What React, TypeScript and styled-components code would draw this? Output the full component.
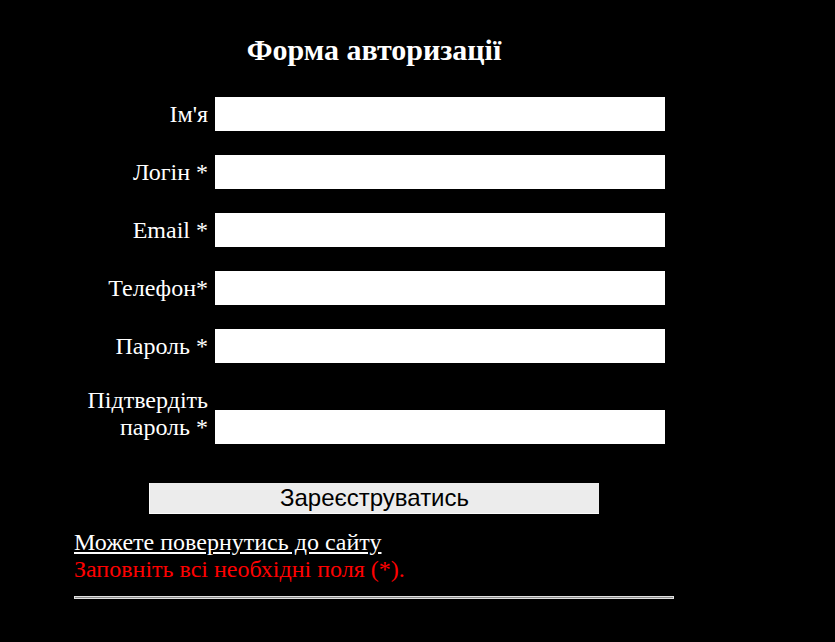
import React from "react";
import styled, { createGlobalStyle } from "styled-components";

const GlobalStyle = createGlobalStyle`
  html, body { margin: 0; padding: 0; background: #000; }
  body { font-family: "Liberation Serif", "Times New Roman", serif; color: #fff; }
`;

const Page = styled.div`
  min-height: 642px;
  background: #000;
  padding: 32px 0 0 74px;
  box-sizing: border-box;
`;

const Form = styled.form`
  width: 600px;
  display: flex;
  flex-direction: column;
`;

const Title = styled.h2`
  margin: 0 0 29px;
  text-align: center;
  font-size: 30px;
  font-weight: bold;
  line-height: 36px;
  color: #fff;
`;

const Fields = styled.div`
  display: grid;
  grid-template-columns: 134px 450px;
  column-gap: 7px;
  row-gap: 24px;
`;

const Label = styled.label<{ $top?: boolean }>`
  font-size: 24px;
  line-height: 27px;
  text-align: right;
  align-self: ${(p) => (p.$top ? "start" : "center")};
  color: #fff;
`;

const Input = styled.input<{ $offset?: number }>`
  width: 450px;
  height: 34px;
  box-sizing: border-box;
  border: none;
  background: #fff;
  margin: ${(p) => (p.$offset ? `${p.$offset}px 0 0` : "0")};
  align-self: ${(p) => (p.$offset ? "start" : "center")};
  outline: none;
`;

const Submit = styled.button`
  width: 450px;
  height: 31px;
  margin: 39px auto 0;
  background: #ececec;
  border: none;
  border-left: 1px solid #fafafa;
  border-bottom: 1px solid #fafafa;
  font-family: "Liberation Sans", Arial, sans-serif;
  font-size: 24px;
  color: #000;
  padding: 0;
  cursor: pointer;
`;

const Footer = styled.div`
  margin-top: 15px;
  display: flex;
  flex-direction: column;
  font-size: 24px;
  line-height: 27px;
`;

const BackLink = styled.a`
  color: #fff;
  text-decoration: underline;
  align-self: flex-start;
`;

const Warning = styled.div`
  color: #ff0000;
`;

const Rule = styled.hr`
  width: 600px;
  margin: 13px 0 0;
  background: #8a8a8a;
  border: 1px solid #e0e0e0;
  box-sizing: border-box;
  height: 3px;
`;

const fields = [
  { id: "name", label: "Ім'я", type: "text" },
  { id: "login", label: "Логін *", type: "text" },
  { id: "email", label: "Email *", type: "email" },
  { id: "phone", label: "Телефон*", type: "tel" },
  { id: "pass", label: "Пароль *", type: "password" },
];

export default function App() {
  return (
    <>
      <GlobalStyle />
      <Page>
        <Form onSubmit={(e) => e.preventDefault()}>
          <Title>Форма авторизації</Title>
          <Fields>
            {fields.map((f) => (
              <React.Fragment key={f.id}>
                <Label htmlFor={f.id}>{f.label}</Label>
                <Input id={f.id} type={f.type} />
              </React.Fragment>
            ))}
            <Label htmlFor="confirm" $top>
              Підтвердіть пароль *
            </Label>
            <Input id="confirm" type="password" $offset={23} />
          </Fields>
          <Submit type="submit">Зареєструватись</Submit>
          <Footer>
            <BackLink href="#">Можете повернутись до сайту</BackLink>
            <Warning>Заповніть всі необхідні поля (*).</Warning>
          </Footer>
          <Rule />
        </Form>
      </Page>
    </>
  );
}
